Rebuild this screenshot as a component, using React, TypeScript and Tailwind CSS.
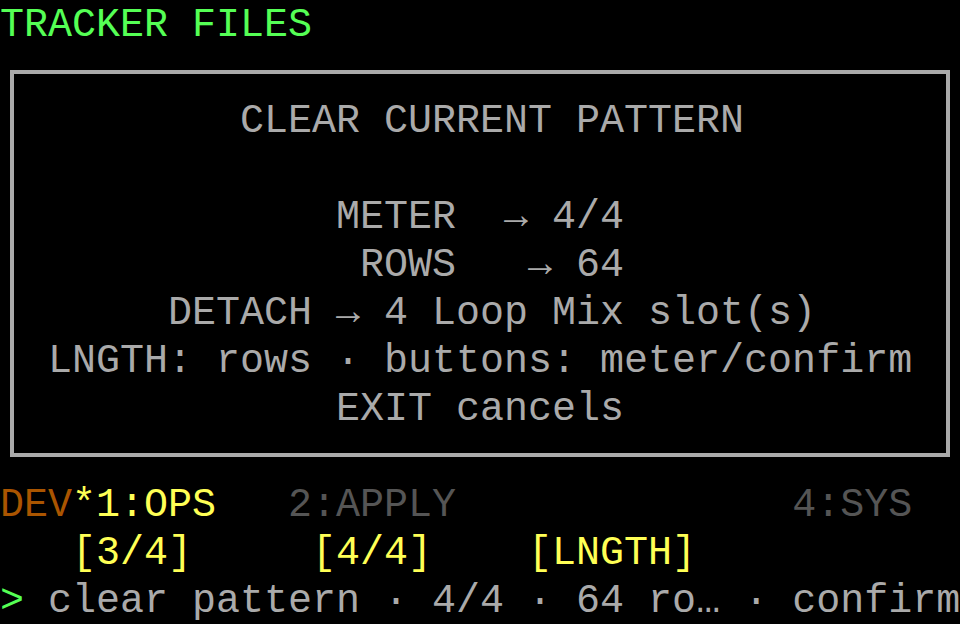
const GREEN = 'text-[#55ff55]'
const GRAY = 'text-[#aaaaaa]'

function Row({ children, className = '' }: { children: React.ReactNode; className?: string }) {
  return <div className={`h-12 leading-[52px] whitespace-pre ${className}`}>{children}</div>
}

export default function App() {
  return (
    <div className="w-[960px] h-[624px] overflow-hidden bg-black font-['Liberation_Mono',monospace] text-[40px]">
      <Row className={GREEN}>TRACKER FILES</Row>

      {/* dialog */}
      <div className={`mt-[22px] mx-[10px] border-4 border-[#aaaaaa] pt-[22px] pb-[21px] ${GRAY}`}>
        <Row className="pl-[226px]">CLEAR CURRENT PATTERN</Row>
        <Row>{' '}</Row>
        <Row className="pl-[322px]">METER  → 4/4</Row>
        <Row className="pl-[346px]">ROWS   → 64</Row>
        <Row className="pl-[154px]">DETACH → 4 Loop Mix slot(s)</Row>
        <Row className="pl-[34px]">LNGTH: rows · buttons: meter/confirm</Row>
        <Row className="pl-[322px]">EXIT cancels</Row>
      </div>

      <div className="mt-[23px]">
        <Row>
          <span className="text-[#aa5500]">DEV</span>
          <span className="text-[#ffff55]">*1:OPS</span>
          <span className="text-[#555555]">{'   2:APPLY              4:SYS'}</span>
        </Row>
        <Row className="text-[#ffff55]">{'   [3/4]     [4/4]    [LNGTH]'}</Row>
        <Row>
          <span className={GREEN}>{'>'}</span>
          <span className={GRAY}>{' clear pattern · 4/4 · 64 ro… · confirm'}</span>
        </Row>
      </div>
    </div>
  )
}
